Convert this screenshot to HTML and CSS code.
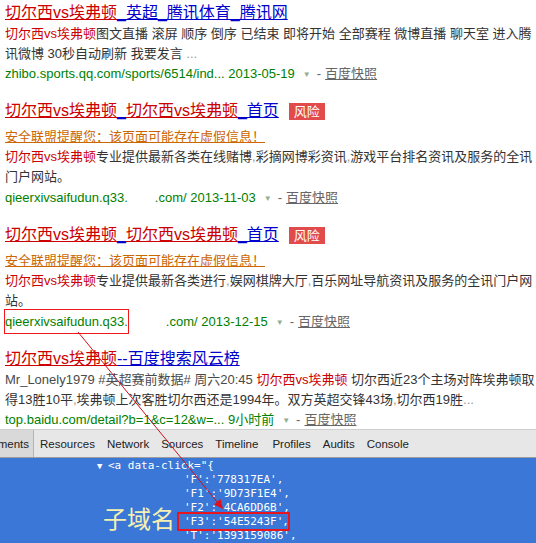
FILE: index.html
```html
<!DOCTYPE html>
<html lang="zh-CN">
<head>
<meta charset="utf-8">
<title>切尔西vs埃弗顿</title>
<link rel="stylesheet" href="styles.css">
</head>
<body>
<div class="results">
  <div class="result">
    <div class="t"><a href="#"><em>切尔西vs埃弗顿</em><span>_英超_腾讯体育_腾讯网</span></a></div>
    <div class="abs"><em>切尔西vs埃弗顿</em>图文直播 滚屏 顺序 倒序 已结束 即将开始 全部赛程 微博直播 聊天室 进入腾<br>讯微博 30秒自动刷新 我要发言 <span class="dots">...</span></div>
    <div class="url">zhibo.sports.qq.com/sports/6514/ind... 2013-05-19<span class="arr">▼</span><span class="sep">-</span><span class="kz">百度快照</span></div>
  </div>
  <div class="result">
    <div class="t"><a href="#"><em>切尔西vs埃弗顿</em><span>_</span><em>切尔西vs埃弗顿</em><span>_首页</span></a><span class="risk">风险</span></div>
    <div class="warn">安全联盟提醒您：该页面可能存在虚假信息！</div>
    <div class="abs"><em>切尔西vs埃弗顿</em>专业提供最新各类在线赌博<span class="cm">,</span>彩摘网博彩资讯<span class="cm">,</span>游戏平台排名资讯及服务的全讯<br>门户网站。</div>
    <div class="url url-tall">qieerxivsaifudun.q33.<span class="blank blank-a"></span>.com/ 2013-11-03<span class="arr">▼</span><span class="sep">-</span><span class="kz">百度快照</span></div>
  </div>
  <div class="result">
    <div class="t"><a href="#"><em>切尔西vs埃弗顿</em><span>_</span><em>切尔西vs埃弗顿</em><span>_首页</span></a><span class="risk">风险</span></div>
    <div class="warn">安全联盟提醒您：该页面可能存在虚假信息！</div>
    <div class="abs"><em>切尔西vs埃弗顿</em>专业提供最新各类进行<span class="cm">,</span>娱网棋牌大厅<span class="cm">,</span>百乐网址导航资讯及服务的全讯门户网<br>站。</div>
    <div class="url url-tall"><span class="box">qieerxivsaifudun.q33.</span><span class="blank blank-b"></span>.com/ 2013-12-15<span class="arr">▼</span><span class="sep">-</span><span class="kz">百度快照</span></div>
  </div>
  <div class="result">
    <div class="t"><a href="#"><em>切尔西vs埃弗顿</em><span>--百度搜索风云榜</span></a></div>
    <div class="abs"><span class="user">Mr_Lonely1979 #英超赛前数据# 周六20:45</span> <em>切尔西vs埃弗顿</em> 切尔西近23个主场对阵埃弗顿取<br>得13胜10平<span class="cm">,</span>埃弗顿上次客胜切尔西还是1994年。双方英超交锋43场<span class="cm">,</span>切尔西19胜<span class="dots">...</span></div>
    <div class="url">top.baidu.com/detail?b=1&amp;c=12&amp;w=... 9小时前<span class="arr">▼</span><span class="sep">-</span><span class="kz">百度快照</span></div>
  </div>
</div>

<div class="devtools">
  <div class="tabs">
    <span class="tab active">ments</span>
    <span class="tab">Resources</span>
    <span class="tab">Network</span>
    <span class="tab">Sources</span>
    <span class="tab wide">Timeline</span>
    <span class="tab">Profiles</span>
    <span class="tab">Audits</span>
    <span class="tab">Console</span>
  </div>
  <div class="code">
    <div class="line first"><span class="tri">▼</span>&lt;a data-click="{</div>
    <div class="line kv">'F':'778317EA',</div>
    <div class="line kv">'F1':'9D73F1E4',</div>
    <div class="line kv">'F2':'4CA6DD6B',</div>
    <div class="line kv"><span class="hl">'F3':'54E5243F'</span>,</div>
    <div class="line kv">'T':'1393159086',</div>
  </div>
</div>

<div class="label">子域名</div>

<svg class="arrow" width="536" height="543" viewBox="0 0 536 543" aria-hidden="true">
  <line x1="78" y1="332" x2="218" y2="503" stroke="#d0101a" stroke-width="1"/>
  <polygon points="223,509 214,504.5 220.5,499" fill="#e0101a"/>
</svg>
</body>
</html>
```
FILE: styles.css
```css
* { box-sizing: border-box; }
html, body { margin: 0; padding: 0; }
body {
  width: 536px;
  height: 543px;
  overflow: hidden;
  position: relative;
  background: #fff;
  font-family: "Liberation Sans", "Noto Sans CJK SC", sans-serif;
  color: #333;
}
.results {
  height: 429px;
  overflow: hidden;
  padding: 2px 0 0 5px;
}
.result { margin-bottom: 15px; }
.t {
  display: flex;
  align-items: center;
  height: 22px;
  font-size: 16px;
  line-height: 22px;
  white-space: nowrap;
}
.t a { text-decoration: none; }
.t a em {
  font-style: normal;
  color: #cc0000;
  text-decoration: underline;
}
.t a span {
  color: #0000cc;
  text-decoration: underline;
}
.risk {
  margin-left: 10px;
  background: #e24b4b;
  color: #fff;
  font-size: 13px;
  line-height: 17px;
  height: 17px;
  padding: 0 5px;
}
.warn {
  margin-top: 5px;
  font-size: 13px;
  line-height: 20px;
  color: #cc6600;
  text-decoration: underline;
  white-space: nowrap;
}
.abs {
  font-size: 13px;
  line-height: 20px;
  color: #333;
  white-space: nowrap;
}
.abs em { font-style: normal; color: #cc0000; }
.abs .cm { color: #999; }
.abs .dots { color: #999; }
.abs .user { color: #4a4a4a; }
.url {
  font-size: 13px;
  line-height: 20px;
  color: #008000;
  white-space: nowrap;
}
.url-tall { margin-top: 1px; }
.url .arr {
  color: #8fb08f;
  font-size: 8px;
  margin: 0 6px 0 8px;
  vertical-align: 1px;
}
.url .sep { color: #666; margin-right: 4px; }
.url .kz { color: #666; text-decoration: underline; }
.blank { display: inline-block; }
.blank-a { width: 27px; }
.blank-b { width: 38px; }
.box {
  border: 1px solid #f01818;
  padding: 4px 0;
  margin: 0 -1px 0 -1px;
}

.devtools { height: 114px; }
.tabs {
  display: flex;
  align-items: stretch;
  height: 29px;
  background: #e7e7e7;
  border-top: 1px solid #cfcfcf;
  border-bottom: 1px solid #9c9c9c;
  font-family: "Liberation Sans", sans-serif;
  font-size: 11.5px;
  color: #222;
}
.tab {
  display: flex;
  align-items: center;
  padding: 0 6px;
}
.tab.wide { padding: 0 8px 0 6px; }
.tab.active {
  width: 34px;
  background: #d9d9d9;
  border-right: 1px solid #b5b5b5;
  justify-content: flex-end;
  padding: 0 4px 0 0;
}
.code {
  height: 85px;
  background: #3a77d6;
  color: #fff;
  font-family: "DejaVu Sans Mono", "Liberation Mono", monospace;
  font-size: 11px;
  line-height: 14px;
  padding-top: 1px;
  white-space: nowrap;
}
.line.first { padding-left: 97px; }
.line.kv { padding-left: 184px; }
.tri {
  display: inline-block;
  width: 11px;
  font-size: 9px;
}
.hl {
  border: 2px solid #e8141e;
  padding: 1px 5px 1px 5px;
  margin: 0 -8px 0 -7px;
}
.label {
  position: absolute;
  left: 103px;
  top: 504px;
  font-family: "Noto Sans CJK SC", sans-serif;
  font-size: 24px;
  line-height: 28px;
  color: #f6efb2;
}
.arrow {
  position: absolute;
  left: 0;
  top: 0;
  pointer-events: none;
}
```
